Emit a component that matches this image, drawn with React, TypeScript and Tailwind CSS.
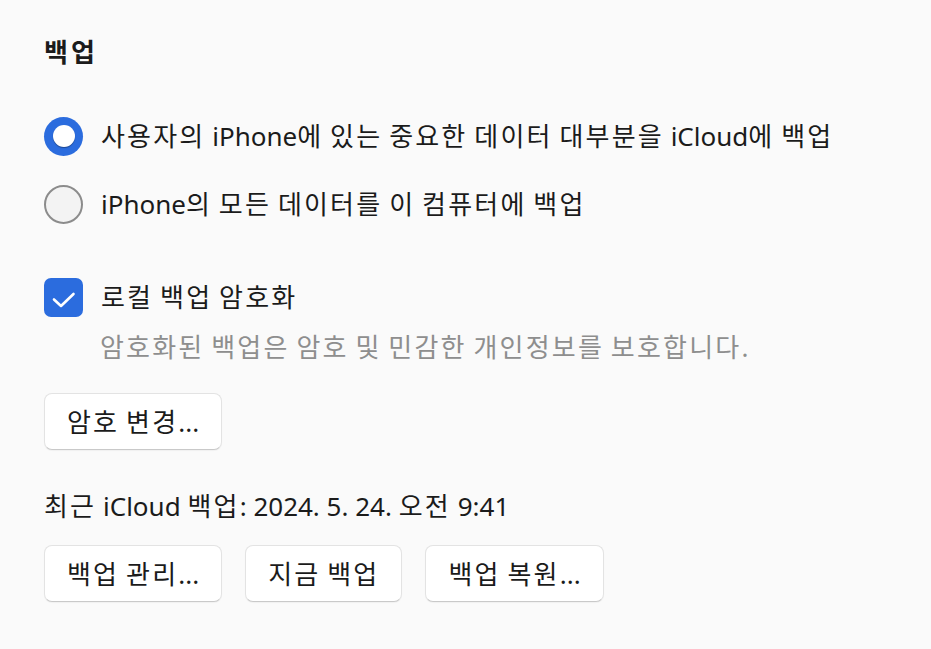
import type { ReactNode } from "react";

// Hangul glyphs in the reference run wider than Noto's, so space them out a little
const K = ({ children, wide = false }: { children: string; wide?: boolean }) => {
  const parts = children.split(/([\uAC00-\uD7A3]+)/);
  return (
    <>
      {parts.map((p, i) =>
        /[\uAC00-\uD7A3]/.test(p) ? (
          <span key={i} className={wide ? "tracking-[3px]" : "tracking-[2.2px]"}>
            {p}
          </span>
        ) : (
          <span key={i}>{p}</span>
        )
      )}
    </>
  );
};

const Btn = ({ label }: { label: string }) => (
  <button className="h-[57px] px-[22px] rounded-[8px] bg-white border border-[#e3e3e3] border-b-[#c9c9c9] text-[26px] text-[#1b1b1b] leading-none shadow-[0_1px_1px_rgba(0,0,0,0.04)]">
    <K>{label}</K>
  </button>
);

const Row = ({ control, children }: { control: ReactNode; children: ReactNode }) => (
  <label className="flex items-center gap-[18px] h-[48px]">
    {control}
    <span className="text-[26px] leading-[36px]">{children}</span>
  </label>
);

export default function App() {
  return (
    <div
      className="min-h-screen bg-[#fafafa] px-[44px] pt-[30px] text-[#1b1b1b]"
      style={{ fontFamily: '"Noto Sans", "Noto Sans CJK KR", sans-serif' }}
    >
      <h2 className="h-[44px] leading-[44px] text-[26px] font-bold">
        <K wide>백업</K>
      </h2>

      {/* backup destination */}
      <div className="mt-[38px] flex flex-col gap-[20px]">
        <Row
          control={
            <span className="w-[39px] h-[39px] rounded-full bg-[#2b6cde] flex items-center justify-center">
              <span className="w-[22px] h-[22px] rounded-full bg-white shadow-[0_1px_1px_rgba(0,0,0,0.35)]" />
            </span>
          }
        >
          <K>사용자의 iPhone에 있는 중요한 데이터 대부분을 iCloud에 백업</K>
        </Row>
        <Row control={<span className="w-[39px] h-[39px] rounded-full bg-[#f3f3f3] border-2 border-[#8c8c8c]" />}>
          <K>iPhone의 모든 데이터를 이 컴퓨터에 백업</K>
        </Row>
      </div>

      {/* encryption */}
      <div className="mt-[45px]">
        <Row
          control={
            <span className="w-[39px] h-[39px] rounded-[7px] bg-[#2b6cde] flex items-center justify-center">
              <svg viewBox="0 0 39 39" className="w-[39px] h-[39px]" fill="none">
                <path
                  d="M10 21.5 L17 28 L29.5 16"
                  stroke="white"
                  strokeWidth="2.6"
                  strokeLinecap="round"
                  strokeLinejoin="round"
                />
              </svg>
            </span>
          }
        >
          <K>로컬 백업 암호화</K>
        </Row>
      </div>
      <p className="mt-[8px] ml-[56px] text-[26px] leading-[36px] text-[#8e8e8e]">
        <K>암호화된 백업은 암호 및 민감한 개인정보를 보호합니다.</K>
      </p>
      <div className="mt-[28px]">
        <Btn label="암호 변경..." />
      </div>

      <p className="mt-[38px] text-[26px] leading-[36px]">
        <K>최근 iCloud 백업: 2024. 5. 24. 오전 9:41</K>
      </p>
      <div className="mt-[21px] flex gap-[23px]">
        <Btn label="백업 관리..." />
        <Btn label="지금 백업" />
        <Btn label="백업 복원..." />
      </div>
    </div>
  );
}
